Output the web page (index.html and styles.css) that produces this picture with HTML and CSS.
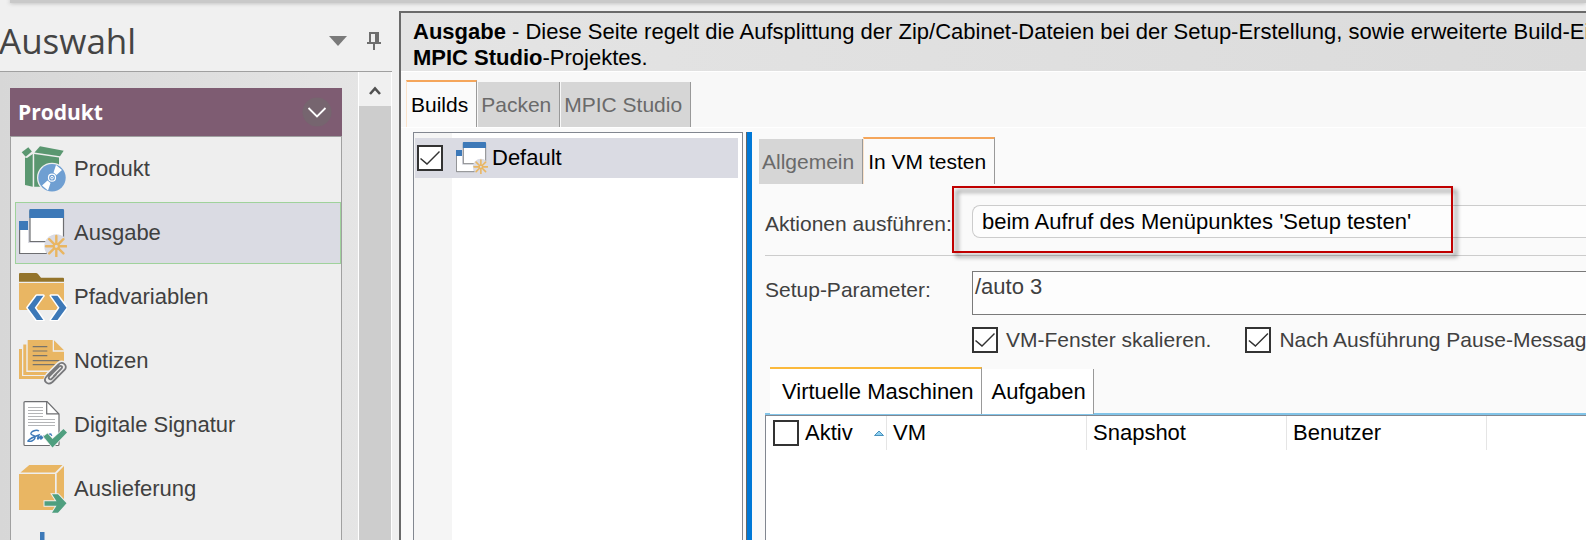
FILE: index.html
```html
<!DOCTYPE html>
<html lang="de">
<head>
<meta charset="utf-8">
<title>MPIC Studio</title>
<link rel="stylesheet" href="styles.css">
</head>
<body>
<svg class="symbols" aria-hidden="true">
  <symbol id="windows" viewBox="0 0 48 48">
    <path d="M.6 14h27v30.500h-27z" fill="#fff" stroke="#6d6e71" stroke-width="1.200"/>
    <path d="M0 12h9v9H0z" fill="#3d79b8"/>
    <path d="M9 0h37.500v34H9z" fill="#dadbe3"/>
    <path d="M11 2h33.500v30.500H11z" fill="#fff" stroke="#6d6e71" stroke-width="1.200"/>
    <path d="M10.300 1q0-1 1-1h32.700q1 0 1 1v8H10.300z" fill="#3d79b8"/>
    <circle cx="37.300" cy="37.300" r="12" fill="#dadbe3"/>
    <path d="M37.300 27v7.500M37.300 40v7.500M27 37.300h7.500M40 37.300h7.500M30.200 30.200l5 5M39.400 39.400l5 5M30.200 44.400l5-5M39.400 35.200l5-5" stroke="#e9b663" stroke-width="2.400" stroke-linecap="round"/>
    <circle cx="37.300" cy="37.300" r="2.600" fill="none" stroke="#e9b663" stroke-width="2"/>
  </symbol>
</svg>

<div class="ribbon-edge"></div>
<div class="workspace">
  <aside class="sidebar">
    <header class="sidebar-head">
      <h1 class="sidebar-title">Auswahl</h1>
      <button class="tool" aria-label="Menü"><svg width="18" height="10" viewBox="0 0 18 10"><path d="M0 0h18L9 10z" fill="#7a7a7a"/></svg></button>
      <button class="tool" aria-label="Anheften"><svg width="14" height="18" viewBox="0 0 14 18"><path d="M3 1h8v10M3 0v11M0 11h14M7 11v7" fill="none" stroke="#6e6e6e" stroke-width="2"/><path d="M9 1v10" stroke="#6e6e6e" stroke-width="2"/></svg></button>
    </header>
    <div class="sidebar-body">
      <nav class="group">
        <button class="group-head">Produkt
          <svg width="30" height="30" viewBox="0 0 30 30"><circle cx="15" cy="15" r="14.500" fill="#76656f"/><path d="M6.500 11l8.500 8.500 8.500-8.500" fill="none" stroke="#fff" stroke-width="1.800"/></svg>
        </button>
        <div class="group-items">
          <a class="item" href="#produkt">
            <svg class="icon" viewBox="0 0 48 48">
              <g fill="#5a9770"><path d="M2.700 7.300l6.600-5 3.600 4.200-6.200 5.200z"/><path d="M21 1.300l23.700 4.400-3.700 5.500-25.500-3.700z"/><path d="M6 12.500l2 .5 5.700-4v32.700L6 40z"/><path d="M15.200 9L40 12.500v29.200H15.200z"/></g>
              <circle cx="33" cy="32.700" r="15" fill="#eee"/><circle cx="33" cy="32.700" r="13.700" fill="#6f9fd2"/>
              <path d="M34.500 27.500l2.500-7.500 6 5-5.500 5zM31.500 38l-2.500 7.500-6-5 5.500-5z" fill="#fff"/>
              <circle cx="33" cy="32.700" r="3.500" fill="#6f9fd2" stroke="#fff" stroke-width="1.200"/><circle cx="33" cy="32.700" r="1.300" fill="#6f9fd2" stroke="#fff"/>
            </svg>Produkt</a>
          <a class="item item-active" href="#ausgabe"><svg class="icon"><use href="#windows"/></svg>Ausgabe</a>
          <a class="item" href="#pfadvariablen">
            <svg class="icon" viewBox="0 0 48 48">
              <path d="M0 1q0-1 1-1h16q1 0 2 1l3 3.700h22q1 0 1 1v3H0z" fill="#94742b"/><path d="M0 10h45v27H1q-1 0-1-1z" fill="#e9b663"/>
              <path d="M17.700 22.700h6.600l-8.600 12 8.600 12.300h-6.600l-9-12.300zM32 22.700h6.500l9 12-9 12.300H32l8.500-12.300z" fill="#3d79b8" stroke="#fff" stroke-width="3" paint-order="stroke" stroke-linejoin="round"/>
            </svg>Pfadvariablen</a>
          <a class="item" href="#notizen">
            <svg class="icon" viewBox="0 0 48 48">
              <g fill="#e9b663"><path d="M0 12h3v27h26v3H0z"/><path d="M4.300 7.500h3V35H33v3H4.300z"/><path d="M8.700 3h25v11.700H45V33.500H8.700z"/><path d="M35 3.300l10 10H35z"/></g>
              <path d="M13.700 9.700h14.600M13.700 14h14.600M13.700 18.700h14.600M13.700 23.700h26.600M13.700 27.700h22" stroke="#77736b" stroke-width="1.200"/>
              <g fill="none" stroke-linecap="round"><path d="M29 38l10.500-10.500c4-4 10 1 6 5.500L33.500 45c-4 3.500-9-1-5.500-5M31 42l11-11" stroke="#eee" stroke-width="5"/><path d="M29 38l10.500-10.500c4-4 10 1 6 5.500L33.500 45c-5 4-10-1-6-5.500L29 38M35 39l7.500-7.500c1.500-2-.5-3.500-2.500-2L30.500 39c-2 2.500.5 4.500 2.500 2.500l4-4" stroke="#77787b" stroke-width="1.800"/></g>
            </svg>Notizen</a>
          <a class="item" href="#signatur">
            <svg class="icon" viewBox="0 0 48 48">
              <path d="M6 .6h22L40 13v30.500q0 1-1 1H6q-1 0-1-1V1.600q0-1 1-1z" fill="#fff" stroke="#6d6e71" stroke-width="1.200"/><path d="M27.700 .6v12.200H40" fill="none" stroke="#6d6e71" stroke-width="1.200"/>
              <path d="M9 6.500h15M9 9.500h15M9 12.500h15M9 15.500h15M9 18.500h27M9 21.500h27M9 24.500h27" stroke="#b4b5b7"/>
              <path d="M20 30c-3-2-9 1-8 3s5 1 4 4-5 4-7 3c2-3 8-5 11-6-1 2-2 4-1 4s2-3 3-3-1 3 0 3 2-3 3-3 0 2 1 2 3-4 5-4 1 2 2 1" fill="none" stroke="#3d79b8" stroke-width="1.400"/>
              <path d="M24.500 35.500l4-3 5 5.500L44.500 28l3.500 3.500-14.500 15z" fill="#4f9f7f" stroke="#eee" stroke-width="1.500" paint-order="stroke"/>
            </svg>Digitale Signatur</a>
          <a class="item" href="#auslieferung">
            <svg class="icon" viewBox="0 0 48 48">
              <g fill="#e9b663"><path d="M1.500 7.500L10.300 0h33.200L36 7.500z"/><path d="M0 9h36v36H0z"/><path d="M37.700 8.500L45 1v37l-7.300 7z"/></g>
              <path d="M25.500 36.300h12l-4.500-7h6l8.500 9-8.500 9.500h-6l4.500-7h-12z" fill="#4f9f7f" stroke="#eee" stroke-width="2" paint-order="stroke"/>
            </svg>Auslieferung</a>
          <a class="item" href="#weitere" aria-label="Weitere Seite">
            <svg class="icon" viewBox="0 0 48 48"><path d="M21 3h4.500v42H21zM2 22h42v4.500H2z" fill="#3d79b8"/></svg></a>
        </div>
      </nav>
      <div class="scrollbar">
        <button class="scroll-up" aria-label="Nach oben"><svg width="12" height="10" viewBox="0 0 12 10"><path d="M1 8l5-5.500L11 8" fill="none" stroke="#505050" stroke-width="2.600"/></svg></button>
        <div class="scroll-thumb"></div>
      </div>
    </div>
  </aside>

  <main class="main">
    <p class="intro"><strong>Ausgabe</strong> - Diese Seite regelt die Aufsplittung der Zip/Cabinet-Dateien bei der Setup-Erstellung, sowie erweiterte Build-Ei<br><strong>MPIC Studio</strong>-Projektes.</p>
    <div class="tabs page-tabs">
      <button class="tab tab-active">Builds</button>
      <button class="tab">Packen</button>
      <button class="tab">MPIC Studio</button>
    </div>
    <div class="page">
      <div class="builds">
        <label class="build">
          <input class="check" type="checkbox" checked>
          <svg class="build-icon"><use href="#windows"/></svg>
          <span>Default</span>
        </label>
      </div>
      <div class="splitter"></div>
      <section class="details">
        <div class="tabs detail-tabs">
          <button class="tab">Allgemein</button>
          <button class="tab tab-active">In VM testen</button>
        </div>
        <div class="form">
          <div class="row row-action">
            <label class="row-label" for="action">Aktionen ausführen:</label>
            <div class="field">
              <select id="action" class="select"><option>beim Aufruf des Menüpunktes 'Setup testen'</option></select>
              <div class="highlight"></div>
            </div>
          </div>
          <div class="row row-params">
            <label class="row-label" for="params">Setup-Parameter:</label>
            <textarea id="params" class="params" rows="1">/auto 3</textarea>
          </div>
          <div class="options">
            <label class="option"><input class="check" type="checkbox" checked>VM-Fenster skalieren.</label>
            <label class="option"><input class="check" type="checkbox" checked>Nach Ausführung Pause-Messag</label>
          </div>
          <div class="tabs vm-tabs">
            <button class="vm-tab vm-tab-active">Virtuelle Maschinen</button>
            <button class="vm-tab">Aufgaben</button>
          </div>
          <div class="grid">
            <table class="table">
              <thead>
                <tr>
                  <th class="col-active"><label class="th-check"><input class="check" type="checkbox">Aktiv<svg class="sort" width="10" height="6" viewBox="0 0 10 6"><path d="M.5 5.500L5 1l4.500 4.500z" fill="#8fd0f0" stroke="#4a92bd"/></svg></label></th>
                  <th class="col">VM</th>
                  <th class="col">Snapshot</th>
                  <th class="col">Benutzer</th>
                  <th class="col-rest"></th>
                </tr>
              </thead>
            </table>
          </div>
        </div>
      </section>
    </div>
  </main>
</div>
</body>
</html>
```
FILE: styles.css
```css
* { box-sizing: border-box; }

body {
  margin: 0;
  height: 100vh;
  overflow: hidden;
  display: flex;
  flex-direction: column;
  background: #f0f0f0;
  color: #404040;
  font: 22px/26px "Liberation Sans", Arial, sans-serif;
}

button, select, textarea {
  font: inherit;
  color: inherit;
  margin: 0;
  padding: 0;
  border: 0;
  background: none;
  border-radius: 0;
}

.symbols { position: absolute; width: 0; height: 0; }

.ribbon-edge {
  flex: none;
  height: 3px;
  margin-left: 10px;
  background: #c9c9c9;
  box-shadow: 0 0 4px #a8a8a8;
}

.workspace { flex: 1; min-height: 0; display: flex; }

/* Sidebar */
.sidebar { flex: none; width: 392px; display: flex; flex-direction: column; }

.sidebar-head {
  flex: none;
  height: 69px;
  padding: 8px 11px 0 0;
  display: flex;
  align-items: center;
  gap: 20px;
  border-bottom: 1px solid #a0a0a0;
}

.sidebar-title {
  flex: 1;
  margin: 0 0 0 -1px;
  font: 400 35px/48px "Open Sans", "Noto Sans", sans-serif;
  color: #444;
}

.tool { display: flex; }

.sidebar-body {
  flex: 1;
  min-height: 0;
  overflow: hidden;
  display: flex;
  justify-content: space-between;
  background: linear-gradient(90deg, #d7d7d7, #e6e6e6);
}

.group { width: 332px; margin: 16px 0 0 10px; }

.group-head {
  width: 100%;
  height: 48px;
  padding: 0 10px 0 8px;
  display: flex;
  align-items: center;
  justify-content: space-between;
  background: #7e5c72;
  color: #fff;
  font: 700 21px/26px "Open Sans", "Noto Sans", sans-serif;
}

.group-items {
  padding: 1px 0 0 4px;
  display: flex;
  flex-direction: column;
  gap: 2px;
  border: 1px solid #a0a0a0;
  background: #eee;
}

.item {
  height: 62px;
  padding-left: 3px;
  display: flex;
  align-items: center;
  gap: 7px;
  border: 1px solid transparent;
  color: #404040;
  text-decoration: none;
}

.item-active { border-color: #9fd29b; background: #dadbe3; }

.icon { flex: none; width: 48px; height: 48px; }

.scrollbar {
  width: 34px;
  display: flex;
  flex-direction: column;
  border: solid #fff;
  border-width: 0 1px;
}

.scroll-up {
  flex: none;
  height: 34px;
  padding-top: 4px;
  display: flex;
  align-items: center;
  justify-content: center;
  background: #f0f0f0;
}

.scroll-thumb { flex: 1; background: #cdcdcd; }

/* Main panel */
.main {
  flex: 1;
  min-width: 0;
  margin: 8px 0 0 7px;
  display: flex;
  flex-direction: column;
  border: solid #6a6a6a;
  border-width: 2px 0 0 2px;
  background: #f8f8f8;
  overflow: hidden;
}

.intro {
  flex: none;
  margin: 0;
  padding: 6px 0 0 12px;
  height: 59px;
  border-bottom: 1px solid #fff;
  background: linear-gradient(90deg, #e4e4e4, #dbdbdb);
  color: #000;
  white-space: nowrap;
}

.tabs { display: flex; align-items: flex-end; }

.page-tabs { flex: none; padding: 8px 0 0 5px; gap: 1px; }

.tab {
  height: 45px;
  padding: 0 8px 0 3px;
  border-right: 1px solid #999;
  background: #d6d6d6;
  color: #6a6a6a;
  font-size: 21px;
}

.tab-active {
  height: 47px;
  padding: 0 8px 0 4px;
  border-top: 2px solid #f5a65b;
  border-left: 1px solid #fbe3cb;
  background: #fafafa;
  color: #000;
}

.page {
  flex: 1;
  min-height: 0;
  padding: 4px 0 0 12px;
  display: flex;
  border-top: 1px solid #fff;
  background: #fafafa;
}

.builds {
  flex: none;
  width: 330px;
  padding: 5px 4px 0 1px;
  border: 1px solid #828790;
  border-bottom: 0;
  background: linear-gradient(90deg, #f5f5f5 38px, #fff 38px);
}

.build {
  height: 40px;
  padding-left: 2px;
  display: flex;
  align-items: center;
  background: #dadbe3;
  color: #000;
}

.build-icon { width: 32px; height: 32px; margin: 0 4px 0 13px; }

.check {
  appearance: none;
  flex: none;
  width: 26px;
  height: 26px;
  margin: 0;
  border: 2px solid #333;
  background: #fff;
}

.check:checked::before {
  content: "";
  display: block;
  width: 22px;
  height: 22px;
  background: #333;
  clip-path: polygon(1px 12px, 2px 11px, 8px 16px, 20px 4px, 21px 5px, 8px 18px);
}

.splitter {
  flex: none;
  width: 6px;
  margin-left: 3px;
  border-left: 1px solid #666;
  background: #0078d7;
}

.details {
  flex: 1;
  min-width: 0;
  padding-top: 5px;
  display: flex;
  flex-direction: column;
}

.detail-tabs { flex: none; padding-left: 7px; }

.form {
  flex: 1;
  min-height: 0;
  padding-left: 13px;
  display: flex;
  flex-direction: column;
}

.row { display: grid; grid-template-columns: 207px 1fr; }

.row-label { padding-top: 6px; font-size: 21px; }

.row-action {
  padding: 21px 0 17px;
  border-bottom: 1px solid #ccc;
}

.field { position: relative; }

.select {
  appearance: none;
  display: block;
  width: 100%;
  height: 33px;
  padding-left: 9px;
  border: 1px solid #ccc;
  border-right: 0;
  border-radius: 8px 0 0 8px;
  background: #fdfdfd;
  color: #000;
}

.highlight {
  position: absolute;
  left: -20px;
  top: -19px;
  width: 501px;
  height: 67px;
  border: 2px solid #c00000;
  filter: drop-shadow(4px 4px 2px rgba(0, 0, 0, 0.5));
  pointer-events: none;
}

.row-params { padding-top: 15px; }

.params {
  display: block;
  height: 44px;
  padding: 2px;
  border: 1px solid #7a7a7a;
  border-right: 0;
  background: #fdfdfd;
  resize: none;
  overflow: hidden;
}

.options {
  padding: 12px 0 0 207px;
  display: flex;
  gap: 34px;
  font-size: 21px;
  white-space: nowrap;
}

.option { display: flex; align-items: center; gap: 8px; }

.vm-tabs {
  position: relative;
  margin-bottom: -1px;
  padding: 14px 0 0 5px;
}

.vm-tab {
  height: 45px;
  padding: 0 7px 0 10px;
  border-right: 1px solid #999;
  background: #fff;
  color: #000;
}

.vm-tab-active { height: 47px; padding-left: 12px; border-top: 2px solid #fbb93c; }

.grid {
  flex: 1;
  border-top: 2px solid #82c4e8;
  background: #fff;
}

.table {
  width: 100%;
  height: 100%;
  border-spacing: 0;
  border: solid #828790;
  border-width: 1px 0 0 1px;
  table-layout: fixed;
  color: #000;
}

.table th {
  height: 34px;
  padding: 0 0 0 6px;
  font-weight: 400;
  text-align: left;
  vertical-align: top;
  line-height: 34px;
  background: linear-gradient(#e5e5e5, #e5e5e5) right top / 1px 34px no-repeat;
}

.table .col-active { width: 121px; padding-left: 7px; }
.table .col { width: 200px; }
.table .col-rest { background: none; }

.th-check { display: flex; align-items: center; gap: 6px; height: 34px; }

.sort { margin-left: auto; margin-right: 3px; }
```
